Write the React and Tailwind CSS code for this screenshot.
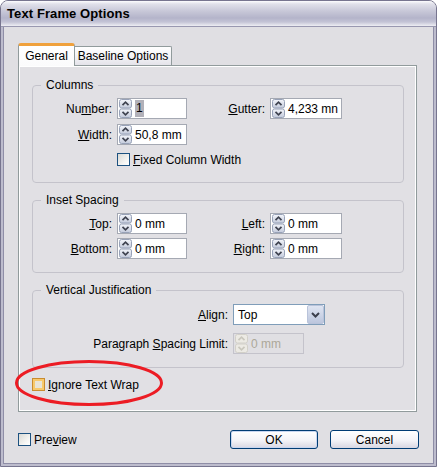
import React from 'react';

function Spinner({ disabled }) {
  const fill = disabled ? '#eceae4' : 'url(#spg)';
  const stroke = disabled ? '#d2d0c8' : '#98a2b8';
  const arrow = disabled ? '#c9c7bd' : '#3f4350';
  return (
    <svg width="13" height="19" viewBox="0 0 13 19" className="shrink-0">
      <defs>
        <linearGradient id="spg" x1="0" y1="0" x2="0" y2="1">
          <stop offset="0" stopColor="#f4f6fb" />
          <stop offset="1" stopColor="#c3cadb" />
        </linearGradient>
      </defs>
      <rect x="0.5" y="0.5" width="12" height="8.5" rx="2" fill={fill} stroke={stroke} />
      <rect x="0.5" y="10" width="12" height="8.5" rx="2" fill={fill} stroke={stroke} />
      <path d="M3.5 6.2 L6.5 3.2 L9.5 6.2" fill="none" stroke={arrow} strokeWidth="1.7" />
      <path d="M3.5 12.8 L6.5 15.8 L9.5 12.8" fill="none" stroke={arrow} strokeWidth="1.7" />
    </svg>
  );
}

function SpinBox({ value, width, selected, disabled }) {
  return (
    <div
      className={`${width} h-[21px] ml-[5px] flex items-center gap-[3px] pl-[1px] border ${
        disabled ? 'border-[#c4c3cb] bg-[#e0dfe3] text-[#aca899]' : 'border-[#a5a9b3] bg-white'
      }`}
    >
      <Spinner disabled={disabled} />
      {selected ? <span className="bg-[#b2b1b9] px-[1px] leading-[17px]">{value}</span> : <span>{value}</span>}
    </div>
  );
}

function Check({ hover }) {
  return hover ? (
    <span className="w-[13px] h-[13px] shrink-0 border border-[#c98c2e] bg-[#e9e4d6] shadow-[inset_0_0_0_2px_#f7c96c]" />
  ) : (
    <span className="w-[13px] h-[13px] shrink-0 border border-[#1c5180] bg-[linear-gradient(135deg,#d9d9d4_0%,#f7f7f5_70%,#ffffff_100%)]" />
  );
}

function Label({ width, children }) {
  return <span className={`${width} shrink-0 text-right`}>{children}</span>;
}

export default function App() {
  return (
    <div className="relative w-[437px] h-[467px] bg-white font-['Liberation_Sans',Arial,sans-serif] text-[12px] text-black">
      <div className="h-full flex flex-col border border-[#77758f] rounded-t-[8px] overflow-hidden bg-[#e0dfe3]">
        {/* Title bar */}
        <div className="h-[26px] shrink-0 flex items-center pl-[6px] border-b border-[#9998b0] bg-[linear-gradient(to_bottom,#fdfdfe_0%,#e0e0ea_12%,#c8c8d8_40%,#b4b4ca_68%,#c4c4d6_84%,#eeeef4_100%)]">
          <span className="text-[13px] font-bold tracking-[0.1px]">Text Frame Options</span>
        </div>

        {/* Body */}
        <div className="flex-1 flex flex-col border-x-2 border-b-2 border-[#bdbccd]">
          <div className="flex-1 flex flex-col border-x border-b border-[#8f8ea7]">
            {/* Tabs */}
            <div className="mt-[16px] ml-[14px] h-[22px] flex items-end">
              <div className="relative z-10 w-[57px] h-[23px] -mb-[1px] flex items-center justify-center pb-[1px] border-x border-t-[3px] border-x-[#919b9c] border-t-[#f0a13c] bg-[linear-gradient(to_bottom,#ffffff_0%,#fbfbfc_100%)] rounded-t-[3px]">
                General
              </div>
              <div className="w-[97px] h-[19px] flex items-center justify-center border-t border-r border-[#919b9c] bg-[linear-gradient(to_bottom,#ffffff_0%,#f1f1f4_60%,#e4e3ea_100%)] rounded-tr-[2px]">
                Baseline Options
              </div>
            </div>

            {/* Panel */}
            <div className="ml-[14px] w-[399px] h-[347px] px-[13px] flex flex-col border border-[#919b9c] shadow-[inset_1px_1px_0_#ffffff,inset_-1px_-1px_0_#ffffff] bg-[#e1e0e4]">
              {/* Columns */}
              <fieldset className="mt-[13px] w-[372px] border border-[#c4c3cb] rounded-[4px] pb-[16px]">
                <legend className="ml-[8px] px-[5px] leading-[13px]">Columns</legend>
                <div className="pt-[6px] flex flex-col">
                  <div className="flex items-center h-[21px]">
                    <Label width="w-[79px]">Nu<u>m</u>ber:</Label>
                    <SpinBox width="w-[70px]" value="1" selected />
                    <Label width="w-[78px]"><u>G</u>utter:</Label>
                    <SpinBox width="w-[72px]" value="4,233 mn" />
                  </div>
                  <div className="flex items-center h-[21px] mt-[5px]">
                    <Label width="w-[79px]"><u>W</u>idth:</Label>
                    <SpinBox width="w-[70px]" value="50,8 mm" />
                  </div>
                  <div className="flex items-center h-[13px] mt-[8px] ml-[84px] gap-[3px]">
                    <Check />
                    <span><u>F</u>ixed Column Width</span>
                  </div>
                </div>
              </fieldset>

              {/* Inset Spacing */}
              <fieldset className="mt-[11px] w-[372px] border border-[#c4c3cb] rounded-[4px] pb-[13px]">
                <legend className="ml-[8px] px-[5px] leading-[13px]">Inset Spacing</legend>
                <div className="pt-[6px] flex flex-col">
                  <div className="flex items-center h-[21px]">
                    <Label width="w-[79px]"><u>T</u>op:</Label>
                    <SpinBox width="w-[70px]" value="0 mm" />
                    <Label width="w-[78px]"><u>L</u>eft:</Label>
                    <SpinBox width="w-[72px]" value="0 mm" />
                  </div>
                  <div className="flex items-center h-[21px] mt-[4px]">
                    <Label width="w-[79px]"><u>B</u>ottom:</Label>
                    <SpinBox width="w-[70px]" value="0 mm" />
                    <Label width="w-[78px]"><u>R</u>ight:</Label>
                    <SpinBox width="w-[72px]" value="0 mm" />
                  </div>
                </div>
              </fieldset>

              {/* Vertical Justification */}
              <fieldset className="mt-[11px] w-[372px] border border-[#c4c3cb] rounded-[4px] pb-[13px]">
                <legend className="ml-[8px] px-[5px] leading-[13px]">Vertical Justification</legend>
                <div className="pt-[7px] flex flex-col">
                  <div className="flex items-center h-[21px]">
                    <Label width="w-[195px]"><u>A</u>lign:</Label>
                    <div className="ml-[5px] w-[92px] h-[21px] flex items-center justify-between border border-[#7f9db9] bg-white">
                      <span className="pl-[4px]">Top</span>
                      <span className="w-[17px] h-[19px] flex items-center justify-center border border-[#b9c3da] rounded-[2px] bg-[linear-gradient(to_bottom,#dfe5f2_0%,#bcc6dd_100%)]">
                        <svg width="9" height="6" viewBox="0 0 9 6">
                          <path d="M1 1 L4.5 4.5 L8 1" fill="none" stroke="#3b3f4c" strokeWidth="2" />
                        </svg>
                      </span>
                    </div>
                  </div>
                  <div className="flex items-center h-[21px] mt-[8px]">
                    <Label width="w-[195px]">Paragraph <u>S</u>pacing Limit:</Label>
                    <SpinBox width="w-[71px]" value="0 mm" disabled />
                  </div>
                </div>
              </fieldset>

              {/* Ignore Text Wrap */}
              <div className="mt-[10px] h-[13px] flex items-center gap-[3px]">
                <Check hover />
                <span><u>I</u>gnore Text Wrap</span>
              </div>
            </div>

            {/* Footer */}
            <div className="mt-[18px] pl-[14px] pr-[14px] h-[19px] flex items-center">
              <Check />
              <span className="ml-[3px]">Pre<u>v</u>iew</span>
              <div className="ml-auto flex gap-[12px]">
                <button className="w-[88px] h-[19px] rounded-[3px] border border-[#003c74] bg-[linear-gradient(to_bottom,#ffffff_0%,#f3f3f7_55%,#d8d7e2_100%)] shadow-[inset_0_0_0_1px_#c8d6f0]">
                  OK
                </button>
                <button className="w-[89px] h-[19px] rounded-[3px] border border-[#003c74] bg-[linear-gradient(to_bottom,#ffffff_0%,#f3f3f7_55%,#d8d7e2_100%)]">
                  Cancel
                </button>
              </div>
            </div>
          </div>
        </div>
      </div>

      {/* Red annotation ellipse */}
      <svg className="absolute left-[13px] top-[358px] pointer-events-none" width="152" height="51" viewBox="0 0 152 51">
        <ellipse cx="76" cy="25" rx="72.5" ry="21.5" fill="none" stroke="#ec1c24" strokeWidth="3" />
      </svg>
    </div>
  );
}
